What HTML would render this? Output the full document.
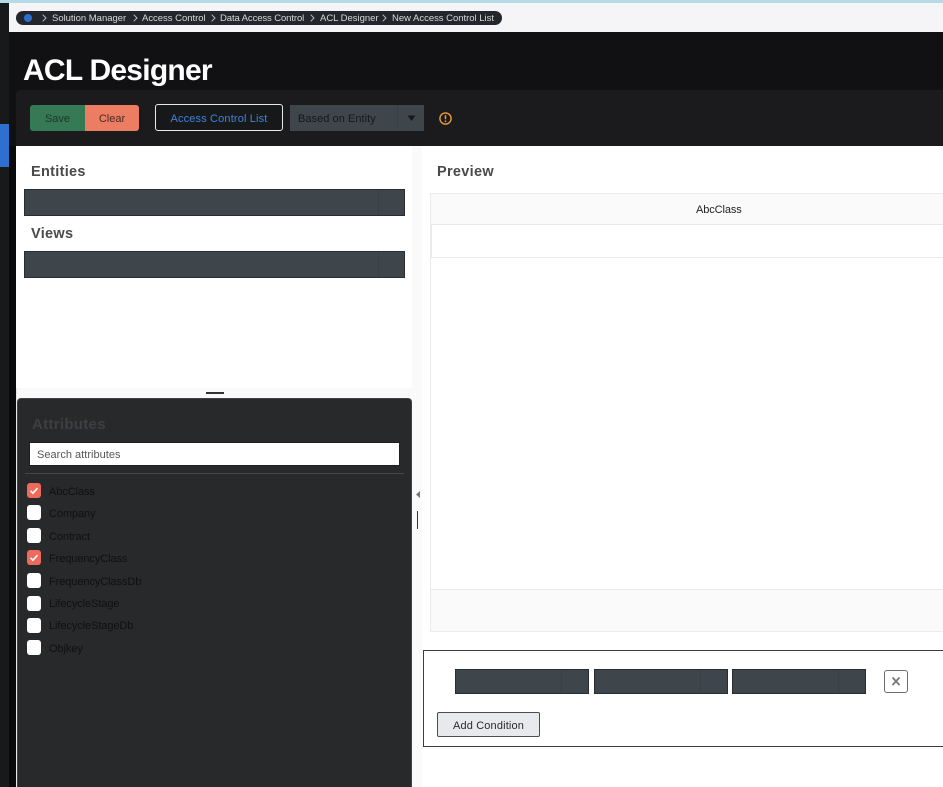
<!DOCTYPE html>
<html><head><meta charset="utf-8"><style>
html,body{margin:0;padding:0;width:943px;height:787px;overflow:hidden;background:#fafafa;font-family:"Liberation Sans",sans-serif}
.a{position:absolute;box-sizing:border-box}
.t{position:absolute;white-space:nowrap}
.sel{position:absolute;box-sizing:border-box;background:#3e464c;border:1px solid #2a2d30}
.h{position:absolute;font-weight:bold;font-size:14.5px;color:#4a4a4a;letter-spacing:.3px;white-space:nowrap}
.cb{position:absolute;left:27px;width:14px;height:15px;border-radius:3px;background:#fff}
.cb.on{background:#ee6a5c}
.cb svg{position:absolute;left:0;top:0}
.l{position:absolute;left:49px;font-size:11px;color:#0f1012;white-space:nowrap;letter-spacing:-.08px}
.bc{position:absolute;top:13px;font-size:9.5px;line-height:11px;color:#d8d8d8;white-space:nowrap;letter-spacing:-.02px}
.ch{position:absolute;top:14px}
</style></head><body>
<div class="a" style="left:0;top:0;width:943px;height:3px;background:#b5dbe8"></div>
<div class="a" style="left:9px;top:3px;width:934px;height:29px;background:#f5f4f6"></div>
<div class="a" style="left:0;top:3px;width:9px;height:784px;background:#17191b"></div>
<div class="a" style="left:0;top:124px;width:9px;height:43px;background:#2f6fd0"></div>
<div class="a" style="left:9px;top:32px;width:7px;height:755px;background:#0a0a0a"></div>
<div class="a" style="left:9px;top:32px;width:934px;height:114px;background:#111113"></div>
<div class="a" style="left:16px;top:90px;width:927px;height:56px;background:#1b1b1d;border-radius:4px 0 0 0"></div>

<div class="a" style="left:16px;top:11px;width:486px;height:14px;border-radius:7px;background:#23262c"></div>
<div class="a" style="left:24px;top:14px;width:8px;height:8px;border-radius:50%;background:#2f6fd0"></div>
<svg class="ch" style="left:42px" width="5" height="8"><path d="M.7.7L4 4 .7 7.3" fill="none" stroke="#bbb"/></svg>
<div class="bc" style="left:52px">Solution Manager</div>
<svg class="ch" style="left:133px" width="5" height="8"><path d="M.7.7L4 4 .7 7.3" fill="none" stroke="#bbb"/></svg>
<div class="bc" style="left:142px">Access Control</div>
<svg class="ch" style="left:211px" width="5" height="8"><path d="M.7.7L4 4 .7 7.3" fill="none" stroke="#bbb"/></svg>
<div class="bc" style="left:220px;letter-spacing:-.1px">Data Access Control</div>
<svg class="ch" style="left:310px" width="5" height="8"><path d="M.7.7L4 4 .7 7.3" fill="none" stroke="#bbb"/></svg>
<div class="bc" style="left:320px">ACL Designer</div>
<svg class="ch" style="left:382px" width="5" height="8"><path d="M.7.7L4 4 .7 7.3" fill="none" stroke="#bbb"/></svg>
<div class="bc" style="left:392px">New Access Control List</div>

<div class="t" style="left:23px;top:52px;font-size:30px;line-height:37px;font-weight:bold;color:#fff;letter-spacing:-.75px">ACL Designer</div>

<div class="a" style="left:30px;top:105px;width:55px;height:26px;background:#357a54;border-radius:3px 0 0 3px;font-size:11px;line-height:28px;text-align:center;color:#25352c">Save</div>
<div class="a" style="left:85px;top:105px;width:54px;height:26px;background:#ec7d62;border-radius:0 3px 3px 0;font-size:11px;line-height:28px;text-align:center;color:#4a2a20">Clear</div>
<div class="a" style="left:155px;top:104px;width:128px;height:27px;background:#17181a;border:1px solid #e8e8e8;border-radius:3px;font-size:11px;line-height:28px;text-align:center;color:#3f84d8;letter-spacing:.15px">Access Control List</div>
<div class="a" style="left:290px;top:105px;width:134px;height:26px;background:#3e464c"></div>
<div class="a" style="left:397px;top:105px;width:1px;height:26px;background:#394045"></div>
<div class="t" style="left:298px;top:112px;font-size:11px;line-height:14px;color:#15171a;letter-spacing:.05px">Based on Entity</div>
<svg class="a" style="left:407px;top:115px" width="9" height="7"><path d="M.5 .5h8L4.5 6z" fill="#15181b"/></svg>
<svg class="a" style="left:438px;top:111px" width="15" height="15" viewBox="0 0 15 15"><circle cx="7.5" cy="7.5" r="5.6" fill="none" stroke="#e99a3c" stroke-width="1.4"/><path d="M7.5 4.2v4" stroke="#e99a3c" stroke-width="1.5"/><circle cx="7.5" cy="10.3" r=".9" fill="#e99a3c"/></svg>

<!-- left top panel -->
<div class="a" style="left:16px;top:146px;width:396px;height:242px;background:#fff"></div>
<div class="a" style="left:16px;top:388px;width:1px;height:399px;background:#e8e8e8"></div>
<div class="h" style="left:31px;top:164px">Entities</div>
<div class="sel" style="left:24px;top:189px;width:381px;height:27px"></div>
<div class="a" style="left:378px;top:190px;width:1px;height:25px;background:#394045"></div>
<div class="h" style="left:31px;top:226px">Views</div>
<div class="sel" style="left:24px;top:251px;width:381px;height:27px"></div>
<div class="a" style="left:378px;top:252px;width:1px;height:25px;background:#394045"></div>
<div class="a" style="left:206px;top:392px;width:18px;height:2px;background:#333"></div>

<!-- attributes -->
<div class="a" style="left:17px;top:398px;width:395px;height:389px;background:#27292b;border:1px solid #3f4246;border-bottom:0;border-radius:4px 4px 0 0"></div>
<div class="h" style="left:32px;top:416px;color:#3d3f42;font-size:15px">Attributes</div>
<div class="a" style="left:29px;top:442px;width:371px;height:24px;background:#fff;border:1px solid #1e1f21;font-size:11px;line-height:24px;padding-left:7px;color:#555;letter-spacing:.02px">Search attributes</div>
<div class="a" style="left:25px;top:473px;width:379px;height:1px;background:#45474a"></div>

<div class="cb on" style="top:483px"><svg width="14" height="15"><path d="M3.5 7.8l2.4 2.4 4.6-5" fill="none" stroke="#fff" stroke-width="1.6"/></svg></div>
<div class="l" style="top:486px">AbcClass</div>
<div class="cb" style="top:505px"></div>
<div class="l" style="top:508px">Company</div>
<div class="cb" style="top:528px"></div>
<div class="l" style="top:531px">Contract</div>
<div class="cb on" style="top:550px"><svg width="14" height="15"><path d="M3.5 7.8l2.4 2.4 4.6-5" fill="none" stroke="#fff" stroke-width="1.6"/></svg></div>
<div class="l" style="top:553px">FrequencyClass</div>
<div class="cb" style="top:573px"></div>
<div class="l" style="top:576px">FrequencyClassDb</div>
<div class="cb" style="top:596px"></div>
<div class="l" style="top:598px">LifecycleStage</div>
<div class="cb" style="top:618px"></div>
<div class="l" style="top:620px">LifecycleStageDb</div>
<div class="cb" style="top:640px"></div>
<div class="l" style="top:643px">Objkey</div>

<svg class="a" style="left:415px;top:491px" width="6" height="8"><path d="M5 0v7L1 3.5z" fill="#777"/></svg>
<div class="a" style="left:417px;top:511px;width:1px;height:18px;background:#333"></div>

<!-- preview -->
<div class="a" style="left:422px;top:146px;width:521px;height:494px;background:#fff"></div>
<div class="h" style="left:437px;top:164px">Preview</div>
<div class="a" style="left:430px;top:193px;width:513px;height:439px;border:1px solid #eaeaea;border-right:0;background:#fff"></div>
<div class="a" style="left:431px;top:194px;width:512px;height:30px;background:#fafafa"></div>
<div class="t" style="left:696px;top:203px;font-size:11px;line-height:14px;color:#222;letter-spacing:-.1px">AbcClass</div>
<div class="a" style="left:431px;top:224px;width:512px;height:34px;border:1px solid #eaeaea;border-right:0;background:#fff"></div>
<div class="a" style="left:431px;top:589px;width:512px;height:42px;background:#fafafa;border-top:1px solid #eaeaea"></div>

<!-- condition -->
<div class="a" style="left:422px;top:640px;width:521px;height:147px;background:#fff"></div>
<div class="a" style="left:423px;top:650px;width:521px;height:97px;border:1px solid #3a3c3e;background:#fff"></div>
<div class="sel" style="left:455px;top:669px;width:134px;height:25px"></div>
<div class="a" style="left:561px;top:670px;width:1px;height:23px;background:#394045"></div>
<div class="sel" style="left:594px;top:669px;width:134px;height:25px"></div>
<div class="a" style="left:700px;top:670px;width:1px;height:23px;background:#394045"></div>
<div class="sel" style="left:732px;top:669px;width:134px;height:25px"></div>
<div class="a" style="left:838px;top:670px;width:1px;height:23px;background:#394045"></div>
<div class="a" style="left:884px;top:670px;width:24px;height:23px;border:1px solid #6a6c6e;border-radius:3px;background:#fff"></div>
<svg class="a" style="left:891px;top:676px" width="10" height="11"><path d="M1.5 1.5l7 7.5M8.5 1.5l-7 7.5" stroke="#777" stroke-width="1.8" fill="none"/></svg>
<div class="a" style="left:437px;top:712px;width:103px;height:25px;background:#e8e9ed;border:1px solid #4a4c4e;border-radius:2px;font-size:11px;line-height:26px;text-align:center;color:#2a2a2a;letter-spacing:.15px">Add Condition</div>
</body></html>
